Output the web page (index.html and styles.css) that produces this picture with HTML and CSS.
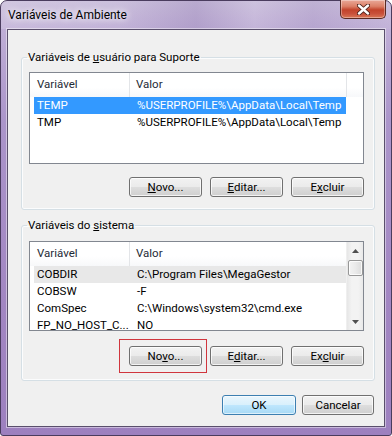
FILE: index.html
```html
<!DOCTYPE html>
<html lang="pt-BR">
<head>
<meta charset="utf-8">
<title>Variáveis de Ambiente</title>
<link rel="stylesheet" href="styles.css">
</head>
<body>
<div class="window">
  <div class="titlebar">
    <span class="title">Variáveis de Ambiente</span>
    <div class="close">
      <svg width="13" height="11" viewBox="0 0 13 11">
        <path d="M2 1.5 L11 9.5 M11 1.5 L2 9.5" stroke="#4a2018" stroke-width="4.2" stroke-linecap="round" fill="none"/>
        <path d="M2 1.5 L11 9.5 M11 1.5 L2 9.5" stroke="#ffffff" stroke-width="2.4" stroke-linecap="round" fill="none"/>
      </svg>
    </div>
  </div>
  <div class="frame-body">
    <div class="client">
      <fieldset class="group g1">
        <legend>Variáveis de <u>u</u>suário para Suporte</legend>
        <div class="list l1">
          <div class="hdr">
            <div class="hc c1">Variável</div>
            <div class="hc c2">Valor</div>
            <div class="hc c3"></div>
          </div>
          <div class="row sel"><div class="rc1">TEMP</div><div class="rc2">%USERPROFILE%\AppData\Local\Temp</div></div>
          <div class="row"><div class="rc1">TMP</div><div class="rc2">%USERPROFILE%\AppData\Local\Temp</div></div>
        </div>
        <div class="btns">
          <button class="btn"><u>N</u>ovo...</button>
          <button class="btn"><u>E</u>ditar...</button>
          <button class="btn">E<u>x</u>cluir</button>
        </div>
      </fieldset>

      <fieldset class="group g2">
        <legend>Variáveis do <u>s</u>istema</legend>
        <div class="list l2">
          <div class="lv">
            <div class="hdr hdr2">
              <div class="hc c1">Variável</div>
              <div class="hc c2">Valor</div>
            </div>
            <div class="row inact"><div class="rc1">COBDIR</div><div class="rc2">C:\Program Files\MegaGestor</div></div>
            <div class="row"><div class="rc1">COBSW</div><div class="rc2">-F</div></div>
            <div class="row"><div class="rc1">ComSpec</div><div class="rc2">C:\Windows\system32\cmd.exe</div></div>
            <div class="row"><div class="rc1">FP_NO_HOST_C...</div><div class="rc2">NO</div></div>
          </div>
          <div class="sb">
            <div class="sb-arrow">
              <svg width="7" height="4" viewBox="0 0 7 4"><path d="M0 4 L3.5 0 L7 4 Z" fill="#505050"/></svg>
            </div>
            <div class="sb-thumb"></div>
            <div class="sb-track"></div>
            <div class="sb-arrow">
              <svg width="7" height="4" viewBox="0 0 7 4"><path d="M0 0 L3.5 4 L7 0 Z" fill="#505050"/></svg>
            </div>
          </div>
        </div>
        <div class="btns btns2">
          <span class="marked"><button class="btn">No<u>v</u>o...</button><span class="redbox"></span></span>
          <button class="btn">E<u>d</u>itar...</button>
          <button class="btn">Ex<u>c</u>luir</button>
        </div>
      </fieldset>

      <div class="dlg">
        <button class="btn ok">OK</button>
        <button class="btn cancel">Cancelar</button>
      </div>
    </div>
  </div>
</div>
</body>
</html>
```

FILE: styles.css
```css
* { box-sizing: border-box; }

html, body {
  margin: 0;
  padding: 0;
}

body {
  width: 392px;
  height: 436px;
  overflow: hidden;
  background: #ffffff;
  font-family: Roboto, "Liberation Sans", sans-serif;
  font-size: 11.5px;
  color: #000;
}

.window {
  width: 392px;
  height: 436px;
  border: 1px solid #4a3c5e;
  border-radius: 7px 7px 3px 3px;
  background: linear-gradient(180deg, #c9bddb 0px, #bfaed6 28px, #ab95ca 120px, #a286c2 300px, #9d80bf 100%);
  display: flex;
  flex-direction: column;
}

.titlebar {
  height: 28px;
  flex: none;
  display: flex;
  justify-content: space-between;
  align-items: flex-start;
  padding: 0 5px 0 7px;
  background: linear-gradient(90deg, rgba(255,255,255,0.15), rgba(255,255,255,0.05) 30%, rgba(110,85,150,0.18) 50%, rgba(255,255,255,0.08) 65%, rgba(120,95,160,0.12) 80%, rgba(255,255,255,0.05));
  border-radius: 6px 6px 0 0;
}

.title {
  margin-top: 6px;
  line-height: 16px;
  font-size: 12px;
  color: #000;
  text-shadow: 0 0 6px #fff, 0 0 10px rgba(255,255,255,0.9);
}

.close {
  width: 46px;
  height: 19px;
  margin-top: -1px;
  border: 1px solid #5a2a22;
  border-top: none;
  border-radius: 0 0 5px 5px;
  background: linear-gradient(180deg, #e9a898 0%, #dc8068 35%, #c2432b 55%, #c8503a 75%, #d97656 100%);
  box-shadow: inset 0 0 0 1px rgba(255,255,255,0.35);
  display: flex;
  align-items: center;
  justify-content: center;
}

.frame-body {
  flex: 1;
  display: flex;
  padding: 0 6px 8px 6px;
}

.client {
  flex: 1;
  background: #f0f0f0;
  border: 1px solid #5a4f6c;
  box-shadow: 0 0 0 1px rgba(255,255,255,0.45);
  display: flex;
  flex-direction: column;
  padding: 19px 9px 0 13px;
}

.group {
  margin: 0;
  border: 1px solid #d5dfe5;
  border-radius: 3px;
  box-shadow: inset 0 0 0 1px #fbfcfd;
  padding: 7px 10px 12px 7px;
  min-width: 0;
}

.group legend {
  padding: 0 1px;
  margin-left: -2px;
  line-height: 16px;
  font-size: 11.5px;
}

.g2 {
  margin-top: 7px;
  padding-top: 8px;
  padding-bottom: 14px;
}

.list {
  background: #fff;
  border: 1px solid #828790;
  overflow: hidden;
}

.l1 { height: 92px; }

.l2 {
  height: 90px;
  display: flex;
}

.lv {
  flex: 1;
  min-width: 0;
}

.hdr {
  display: grid;
  grid-template-columns: 100px 217px 1fr;
  height: 24px;
  background: linear-gradient(180deg, #ffffff 0%, #ffffff 60%, #f7f8fa 100%);
  color: #1e2a36;
}

.hdr2 {
  grid-template-columns: 100px 1fr;
}

.hc {
  line-height: 23px;
  border-right: 1px solid #e3e5e8;
  white-space: nowrap;
}

.hc.c1 { padding-left: 7px; }
.hc.c2 { padding-left: 6px; }
.hc.c3 { border-right: none; }
.hdr2 .hc.c2 { border-right: none; }

.row {
  display: grid;
  grid-template-columns: 99px 213px;
  width: 312px;
  height: 17px;
  line-height: 17px;
  margin-left: 4px;
  white-space: nowrap;
}

.rc1 { padding-left: 3px; overflow: hidden; }
.rc2 { padding-left: 4px; overflow: hidden; }

.row.sel {
  background: #3399ff;
  color: #fff;
}

.row.inact {
  background: #e8e8e8;
}

.sb {
  width: 17px;
  flex: none;
  display: flex;
  flex-direction: column;
  align-items: center;
  background: linear-gradient(90deg, #e6e6e6 0%, #f3f3f3 30%, #f3f3f3 70%, #e9e9e9 100%);
  border-left: 1px solid #efefef;
}

.sb-arrow {
  height: 17px;
  width: 100%;
  display: flex;
  align-items: center;
  justify-content: center;
  flex: none;
}

.sb-thumb {
  width: 15px;
  height: 16px;
  margin-top: 1px;
  flex: none;
  border: 1px solid #979797;
  border-radius: 2px;
  background: linear-gradient(90deg, #f3f3f3 0%, #eaeaea 50%, #dcdcdc 100%);
  box-shadow: inset 0 0 0 1px rgba(255,255,255,0.8);
}

.sb-track { flex: 1; }

.btns {
  display: flex;
  justify-content: flex-end;
  gap: 8px;
  margin-top: 13px;
}

.btns2 { margin-top: 15px; }

.btn {
  width: 73px;
  height: 20px;
  padding: 0;
  border: 1px solid #707070;
  border-radius: 3px;
  background: linear-gradient(180deg, #f2f2f2 0%, #ebebeb 48%, #dddddd 52%, #cfcfcf 100%);
  box-shadow: inset 0 0 0 1px rgba(255,255,255,0.75);
  font-family: inherit;
  font-size: 11.5px;
  color: #000;
  line-height: 18px;
}

.marked {
  position: relative;
  display: block;
}

.marked .btn { display: block; }

.redbox {
  position: absolute;
  left: -10px;
  top: -7px;
  width: 88px;
  height: 34px;
  border: 1px solid #d0353d;
  pointer-events: none;
}

.dlg {
  display: flex;
  justify-content: flex-end;
  gap: 6px;
  margin-top: 14px;
  margin-right: 1px;
}

.ok {
  width: 74px;
  border-color: #3c7fb1;
  background: linear-gradient(180deg, #eaf6fd 0%, #d9f0fc 48%, #bee6fd 52%, #a7d9f5 100%);
  box-shadow: inset 0 0 0 1px rgba(255,255,255,0.6);
}

.cancel { width: 72px; }
```
